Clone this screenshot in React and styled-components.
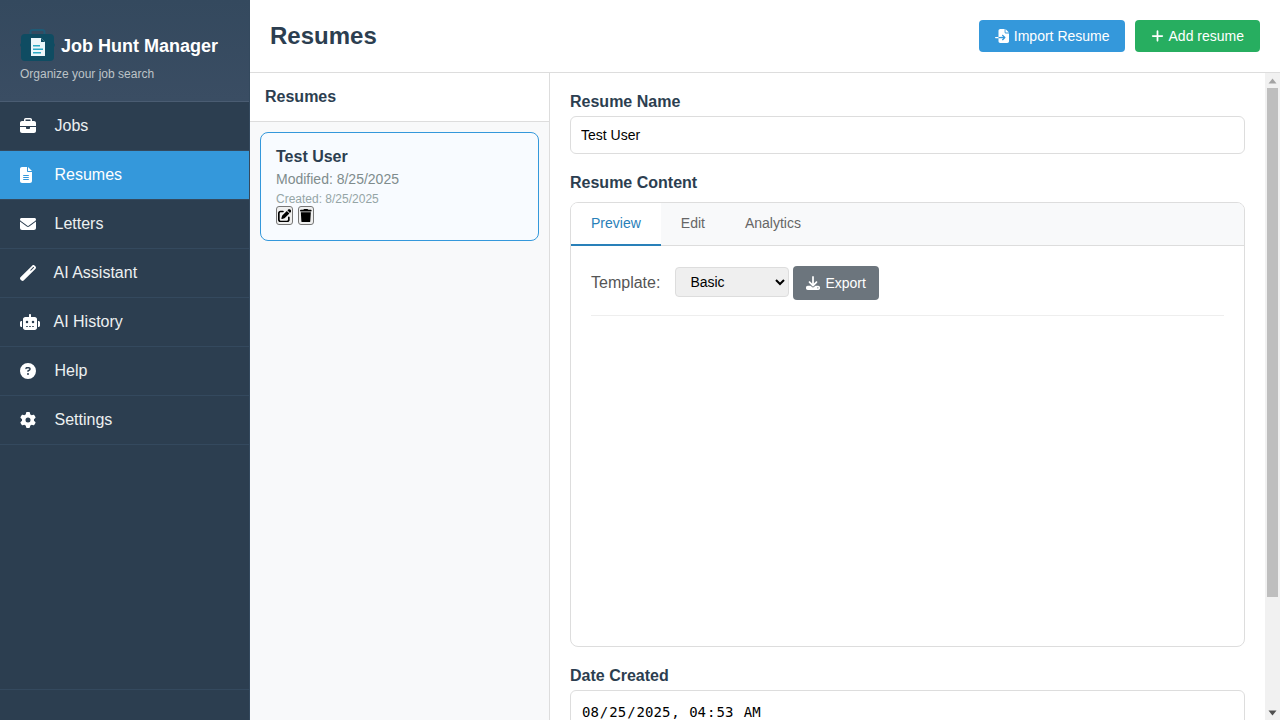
import React, { useState } from "react";
import styled, { createGlobalStyle } from "styled-components";
import {
  FaBriefcase,
  FaFileLines,
  FaEnvelope,
  FaWandMagic,
  FaRobot,
  FaCircleQuestion,
  FaGear,
  FaFileImport,
  FaPlus,
  FaPenToSquare,
  FaTrash,
  FaDownload,
} from "react-icons/fa6";

const GlobalStyle = createGlobalStyle`
  * {
    box-sizing: border-box;
  }
  html, body {
    margin: 0;
    height: 100%;
    overflow: hidden;
    font-family: "Liberation Sans", Arial, sans-serif;
    color: #2c3e50;
  }
`;

const Shell = styled.div`
  display: flex;
  width: 1280px;
  height: 720px;
  background: #fff;
`;

const Sidebar = styled.aside`
  width: 250px;
  flex-shrink: 0;
  display: flex;
  flex-direction: column;
  background: #2c3e50;
  color: #fff;
  border-right: 1px solid #34495e;
`;

const Brand = styled.div`
  height: 102px;
  padding: 28px 20px 0;
  background: linear-gradient(180deg, #34495e, #3a4d63);
  border-bottom: 1px solid #4a5c72;
`;

const BrandRow = styled.div`
  display: flex;
  align-items: center;
  gap: 6px;
  height: 36px;
`;

const BrandName = styled.h1`
  margin: 0;
  font-size: 18px;
  font-weight: 700;
  color: #fff;
`;

const Tagline = styled.div`
  margin-top: 3px;
  font-size: 12px;
  color: #bdc3c7;
`;

const Nav = styled.nav`
  flex: 1;
  display: flex;
  flex-direction: column;
`;

const NavItem = styled.a`
  display: flex;
  align-items: center;
  height: 49px;
  padding-left: 20px;
  font-size: 16px;
  color: ${({ $active }) => ($active ? "#fff" : "#ecf0f1")};
  background: ${({ $active }) => ($active ? "#3498db" : "transparent")};
  border-bottom: 1px solid #34495e;
  cursor: pointer;
`;

const NavIcon = styled.span`
  display: flex;
  align-items: center;
  justify-content: flex-start;
  width: ${({ $slot }) => $slot}px;
  color: #fff;

  & > svg {
    flex: none;
    width: ${({ $width }) => $width}px;
    height: 16px;
  }
`;

const SidebarFooter = styled.div`
  height: 31px;
  border-top: 1px solid #34495e;
`;

const Main = styled.main`
  flex: 1;
  min-width: 0;
  display: flex;
  flex-direction: column;
`;

const TopBar = styled.header`
  height: 73px;
  flex-shrink: 0;
  display: flex;
  align-items: center;
  justify-content: space-between;
  padding: 0 20px;
  border-bottom: 1px solid #ddd;
`;

const PageTitle = styled.h2`
  margin: 0;
  font-size: 24px;
  font-weight: 700;
  color: #2c3e50;
`;

const TopActions = styled.div`
  display: flex;
  gap: 10px;
`;

const ActionButton = styled.button`
  display: flex;
  align-items: center;
  gap: 5px;
  height: 32px;
  padding: 0 ${({ $padRight }) => $padRight}px 0 16px;
  border: none;
  border-radius: 4px;
  font-family: inherit;
  font-size: 14px;
  color: #fff;
  background: ${({ $color }) => $color};
  cursor: pointer;

  & > svg {
    width: ${({ $iconWidth }) => $iconWidth}px;
    height: 14px;
  }
`;

const Body = styled.div`
  flex: 1;
  min-height: 0;
  display: flex;
`;

const ListPane = styled.section`
  width: 300px;
  flex-shrink: 0;
  background: #f8f9fa;
  border-right: 1px solid #ddd;
`;

const ListHeader = styled.div`
  height: 49px;
  display: flex;
  align-items: center;
  padding-left: 15px;
  background: #fff;
  border-bottom: 1px solid #ddd;
  font-size: 16px;
  font-weight: 700;
`;

const ResumeList = styled.div`
  padding: 10px;
`;

const ResumeCard = styled.article`
  height: 109px;
  padding: 15px;
  background: #f8fbff;
  border: 1px solid #3498db;
  border-radius: 8px;
`;

const CardTitle = styled.div`
  font-size: 16px;
  font-weight: 700;
  line-height: 18px;
  margin-bottom: 5px;
`;

const CardMeta = styled.div`
  font-size: 14px;
  line-height: 16px;
  color: #7f8c8d;
`;

const CardCreated = styled.div`
  margin-top: 5px;
  font-size: 12px;
  line-height: 14px;
  color: #95a5a6;
`;

const CardActions = styled.div`
  display: flex;
  gap: 5px;
`;

const IconButton = styled.button`
  display: flex;
  align-items: center;
  justify-content: center;
  height: 19px;
  padding: 0 1px;
  background: #efefef;
  border: 1px solid #767676;
  border-radius: 3px;
  color: #000;

  & > svg {
    width: ${({ $iconWidth }) => $iconWidth}px;
    height: 13.33px;
  }
`;

const EditorWrap = styled.div`
  flex: 1;
  min-width: 0;
  display: flex;
`;

const Editor = styled.section`
  flex: 1;
  min-width: 0;
  overflow: hidden;
  padding: 20px;
`;

const ScrollRail = styled.div`
  width: 15px;
  flex-shrink: 0;
  display: flex;
  flex-direction: column;
  background: #f1f1f1;
`;

const ScrollArrow = styled.div`
  height: 15px;
  display: flex;
  align-items: center;
  justify-content: center;
`;

const ScrollTrack = styled.div`
  flex: 1;
  padding: 0 2px;
`;

const ScrollThumb = styled.div`
  height: 509px;
  background: #bebebe;
`;

const Field = styled.div`
  margin-bottom: 20px;
`;

const FieldLabel = styled.label`
  display: block;
  margin-bottom: 5px;
  font-size: 16px;
  line-height: 18px;
  font-weight: 700;
  color: #2c3e50;
`;

const TextInput = styled.input`
  display: block;
  width: 100%;
  height: 38px;
  padding: 10px;
  border: 1px solid #ddd;
  border-radius: 6px;
  font-family: inherit;
  font-size: 14px;
  color: #000;
  background: #fff;
  outline: none;
`;

const DateInput = styled(TextInput)`
  height: 44px;
  font-family: "DejaVu Sans Mono", monospace;

  &::-webkit-calendar-picker-indicator {
    display: none;
  }
`;

const TabsCard = styled.div`
  height: 445px;
  margin-top: 10px;
  border: 1px solid #ddd;
  border-radius: 8px;
  overflow: hidden;
`;

const TabBar = styled.div`
  display: flex;
  height: 43px;
  background: #f8f9fa;
  border-bottom: 1px solid #ddd;
`;

const Tab = styled.button`
  height: 43px;
  padding: 0 20px 1px;
  border: none;
  border-bottom: 2px solid ${({ $active }) => ($active ? "#2980b9" : "transparent")};
  background: ${({ $active }) => ($active ? "#fff" : "transparent")};
  color: ${({ $active }) => ($active ? "#2980b9" : "#666")};
  font-family: inherit;
  font-size: 14px;
  cursor: pointer;
`;

const TabPanel = styled.div`
  padding: 20px;
`;

const PreviewToolbar = styled.div`
  display: flex;
  align-items: center;
  padding-bottom: 15px;
  border-bottom: 1px solid #eee;
`;

const TemplateLabel = styled.span`
  margin-right: 15px;
  font-size: 16px;
  color: #555;
`;

const TemplateSelect = styled.select`
  width: 114px;
  height: 30px;
  margin-bottom: 2px;
  padding: 0 10px;
  border: 1px solid #ddd;
  border-radius: 4px;
  background: #efefef;
  font-family: inherit;
  font-size: 14px;
  color: #000;
`;

const ExportButton = styled.button`
  display: flex;
  align-items: center;
  gap: 5px;
  height: 34px;
  margin-left: 4px;
  padding: 0 13px;
  border: none;
  border-radius: 4px;
  background: #6c757d;
  color: #fff;
  font-family: inherit;
  font-size: 14px;
  cursor: pointer;

  & > svg {
    width: 14px;
    height: 14px;
  }
`;

const BrandLogo = () => (
  <svg width="35" height="35" viewBox="0 1 35 35" aria-hidden="true">
    <rect x="10.5" y="2" width="14" height="6" rx="2" fill="none" stroke="#1f5a75" strokeWidth="2" />
    <rect x="1" y="6" width="33" height="27" rx="4" fill="#0f4c62" />
    <path d="M1 15l-1 2 1 2zM34 15l1 2-1 2z" fill="#0f4c62" />
    <path d="M11 10h10l4 4v14H11z" fill="#ecf7fa" />
    <path d="M21 10v4h4z" fill="#0f4c62" />
    <path d="M13 17h7v1.5h-7zM13 20.5h10V22H13zM13 24h8v1.5h-8z" fill="#2aa9c4" />
  </svg>
);

const ArrowUp = () => (
  <svg width="9" height="6" viewBox="0 0 9 6" aria-hidden="true">
    <path d="M4.5 0.5L8.5 5.5H0.5z" fill="#a3a3a3" />
  </svg>
);

const ArrowDown = () => (
  <svg width="9" height="6" viewBox="0 0 9 6" aria-hidden="true">
    <path d="M0.5 0.5H8.5L4.5 5.5z" fill="#505050" />
  </svg>
);

const navItems = [
  { label: "Jobs", icon: FaBriefcase, width: 16, slot: 34.5 },
  { label: "Resumes", icon: FaFileLines, width: 12, slot: 34.5, active: true },
  { label: "Letters", icon: FaEnvelope, width: 16, slot: 34.5 },
  { label: "AI Assistant", icon: FaWandMagic, width: 16, slot: 33.5 },
  { label: "AI History", icon: FaRobot, width: 20, slot: 33.5 },
  { label: "Help", icon: FaCircleQuestion, width: 16, slot: 34.5 },
  { label: "Settings", icon: FaGear, width: 16, slot: 34.5 },
];

const App = () => {
  const [name, setName] = useState("Test User");
  const [created, setCreated] = useState("2025-08-25T04:53");
  const [template, setTemplate] = useState("basic");

  return (
    <>
      <GlobalStyle />
      <Shell>
        <Sidebar>
          <Brand>
            <BrandRow>
              <BrandLogo />
              <BrandName>Job Hunt Manager</BrandName>
            </BrandRow>
            <Tagline>Organize your job search</Tagline>
          </Brand>
          <Nav>
            {navItems.map(({ label, icon: Icon, active, width, slot }) => (
              <NavItem key={label} $active={active}>
                <NavIcon $width={width} $slot={slot}>
                  <Icon />
                </NavIcon>
                {label}
              </NavItem>
            ))}
          </Nav>
          <SidebarFooter />
        </Sidebar>
        <Main>
          <TopBar>
            <PageTitle>Resumes</PageTitle>
            <TopActions>
              <ActionButton $color="#3498db" $iconWidth={14} $padRight={15}>
                <FaFileImport />
                Import Resume
              </ActionButton>
              <ActionButton $color="#27ae60" $iconWidth={13} $padRight={16}>
                <FaPlus />
                Add resume
              </ActionButton>
            </TopActions>
          </TopBar>
          <Body>
            <ListPane>
              <ListHeader>Resumes</ListHeader>
              <ResumeList>
                <ResumeCard>
                  <CardTitle>Test User</CardTitle>
                  <CardMeta>Modified: 8/25/2025</CardMeta>
                  <CardCreated>Created: 8/25/2025</CardCreated>
                  <CardActions>
                    <IconButton $iconWidth={13.33}>
                      <FaPenToSquare />
                    </IconButton>
                    <IconButton $iconWidth={11.67}>
                      <FaTrash />
                    </IconButton>
                  </CardActions>
                </ResumeCard>
              </ResumeList>
            </ListPane>
            <EditorWrap>
              <Editor>
                <Field>
                  <FieldLabel>Resume Name</FieldLabel>
                  <TextInput value={name} onChange={(e) => setName(e.target.value)} />
                </Field>
                <Field>
                  <FieldLabel>Resume Content</FieldLabel>
                  <TabsCard>
                    <TabBar>
                      <Tab $active>Preview</Tab>
                      <Tab>Edit</Tab>
                      <Tab>Analytics</Tab>
                    </TabBar>
                    <TabPanel>
                      <PreviewToolbar>
                        <TemplateLabel>Template:</TemplateLabel>
                        <TemplateSelect value={template} onChange={(e) => setTemplate(e.target.value)}>
                          <option value="basic">Basic</option>
                          <option value="modern">Modern</option>
                        </TemplateSelect>
                        <ExportButton>
                          <FaDownload />
                          Export
                        </ExportButton>
                      </PreviewToolbar>
                    </TabPanel>
                  </TabsCard>
                </Field>
                <Field>
                  <FieldLabel>Date Created</FieldLabel>
                  <DateInput
                    type="datetime-local"
                    value={created}
                    onChange={(e) => setCreated(e.target.value)}
                  />
                </Field>
              </Editor>
              <ScrollRail>
                <ScrollArrow>
                  <ArrowUp />
                </ScrollArrow>
                <ScrollTrack>
                  <ScrollThumb />
                </ScrollTrack>
                <ScrollArrow>
                  <ArrowDown />
                </ScrollArrow>
              </ScrollRail>
            </EditorWrap>
          </Body>
        </Main>
      </Shell>
    </>
  );
};

export default App;
